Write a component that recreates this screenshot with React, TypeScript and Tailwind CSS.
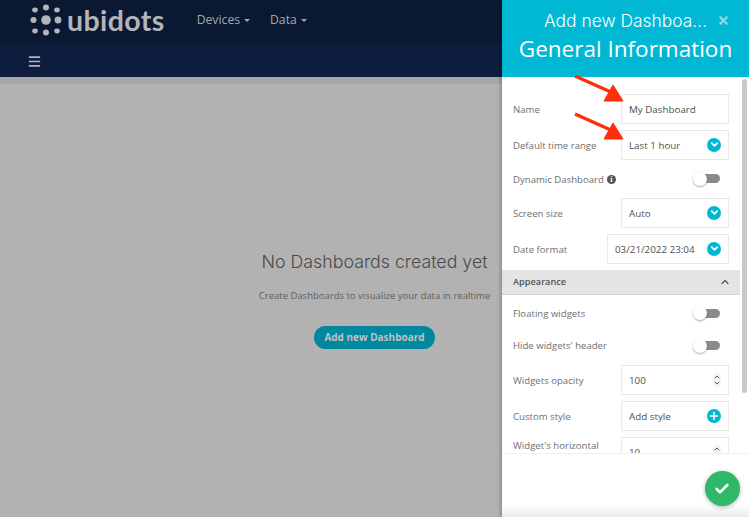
import { Check, ChevronDown, ChevronUp, Plus, X, Menu } from 'lucide-react'

const sans = "font-['Open_Sans',sans-serif]"

function Logo() {
  return (
    <svg width="32" height="32" viewBox="0 0 32 32" className="shrink-0">
      <g fill="#b3b5b9">
        <ellipse cx="5" cy="6" rx="2.8" ry="2.4" />
        <circle cx="16" cy="3.5" r="3" />
        <ellipse cx="27" cy="6" rx="2.8" ry="2.4" />
        <circle cx="3.5" cy="16" r="3" />
        <circle cx="16" cy="16" r="4.8" />
        <circle cx="28" cy="16" r="3.4" />
        <ellipse cx="5" cy="27" rx="2.8" ry="2.4" />
        <circle cx="16" cy="28.5" r="3" />
        <ellipse cx="27" cy="27" rx="2.8" ry="2.4" />
      </g>
    </svg>
  )
}

function NavItem({ label }: { label: string }) {
  return (
    <div className="flex items-center gap-[4px] text-[12.2px] text-[#a4a6ab]">
      {label}
      <span className="mt-[2px] border-x-[3px] border-t-[3px] border-x-transparent border-t-[#a4a6ab]" />
    </div>
  )
}

function Badge({ plus }: { plus?: boolean }) {
  return (
    <span className="flex h-[14px] w-[14px] shrink-0 items-center justify-center rounded-full bg-[#00b8d4] text-white">
      {plus ? <Plus size={12} strokeWidth={3} /> : <ChevronDown size={11} strokeWidth={3.5} />}
    </span>
  )
}

function Spinner() {
  return (
    <span className="flex h-[14px] w-[8px] flex-col items-center justify-center rounded-[3px] bg-[#f3f3f3] text-[#555]">
      <ChevronUp size={8} strokeWidth={3} className="-mb-[1px]" />
      <ChevronDown size={8} strokeWidth={3} className="-mt-[1px]" />
    </span>
  )
}

function Field({ label, value, control, wide, className = 'mt-[6.5px]' }: { label: string; value: string; control?: React.ReactNode; wide?: boolean; className?: string }) {
  return (
    <div className={`flex h-[29.5px] items-center justify-between ${className}`}>
      <span className="pt-[2px] text-[9.6px] text-[#6f6f6f]">{label}</span>
      <div className={`flex h-[29.5px] items-center justify-between border border-[#e9e9e9] px-[7px] text-[9.8px] text-[#4f4f4f] ${wide ? 'w-[122px]' : 'w-[108px]'}`}>
        <span className="pt-[3px]">{value}</span>
        {control}
      </div>
    </div>
  )
}

function ToggleRow({ label, info, className }: { label: string; info?: boolean; className: string }) {
  return (
    <div className={`flex items-center justify-between pr-[9px] ${className}`}>
      <span className="flex items-center gap-[3px] pt-[2px] text-[9.6px] text-[#6f6f6f]">
        {label}
        {info && (
          <span className="flex h-[9px] w-[9px] items-center justify-center rounded-full bg-[#555] font-['Liberation_Serif',serif] text-[8px] font-bold text-white">
            i
          </span>
        )}
      </span>
      <div className="relative h-[9px] w-[25px] rounded-full bg-[#8a8a8a]">
        <span className="absolute -left-[2px] -top-[2.5px] h-[14px] w-[14px] rounded-full bg-white shadow-[0_1px_2px_rgba(0,0,0,0.35)]" />
      </div>
    </div>
  )
}

export default function App() {
  return (
    <div className={`relative flex h-[517px] w-[749px] flex-col overflow-hidden bg-[#b2b2b2] ${sans}`}>
      <div className="flex h-[43px] items-center bg-[#0b1832] pb-[3px] pl-[30px]">
        <Logo />
        <span className="ml-[5px] font-['Lato',sans-serif] text-[28.5px] font-bold leading-none tracking-[0.4px] text-[#b3b5b9]">ubidots</span>
        <div className="ml-[32px] flex gap-[20px]">
          <NavItem label="Devices" />
          <NavItem label="Data" />
        </div>
      </div>
      <div className="flex h-[34px] items-center bg-[#0e1d3d] pl-[27px] pt-[2px] text-[#b3b5b9]">
        <Menu size={15} strokeWidth={2.5} />
      </div>
      <div className="h-[7px] bg-[#a6a6a6]" />
      <div className="flex flex-1 flex-col items-center pt-[167px]">
        <div className="font-['Inter',sans-serif] text-[17.8px] font-light leading-[22px] text-[#4a4a4a]">No Dashboards created yet</div>
        <div className="mt-[16px] text-[9.5px] leading-[14px] text-[#5f5f5f]">Create Dashboards to visualize your data in realtime</div>
        <div className="mt-[23px] flex h-[23px] w-[121px] items-center justify-center rounded-full bg-[#02889e] text-[10px] font-bold text-[#b9c4c6]">
          Add new Dashboard
        </div>
      </div>

      {/* drawer sits over the page */}
      <div className="absolute right-0 top-0 flex h-[517px] w-[247px] flex-col bg-white shadow-[-2px_0_3px_rgba(0,0,0,0.2)]">
        <div className="relative flex h-[77px] flex-col items-center bg-[#00b8d4] text-white">
          <div className="mt-[10px] font-['Inter',sans-serif] text-[17.4px] font-light leading-[22px]">Add new Dashboa...</div>
          <div className="mt-[1px] text-[22.5px] leading-[32px]">General Information</div>
          <X size={13} strokeWidth={4} className="absolute right-[19.5px] top-[13.5px] text-[#8fdcea]" />
        </div>

        <div className="flex h-[376px] overflow-hidden">
          <div className="w-[238px] shrink-0">
            <div className="px-[11px] pt-[10.5px]">
              <Field label="Name" value="My Dashboard" />
              <Field label="Default time range" value="Last 1 hour" control={<Badge />} />
              <ToggleRow label="Dynamic Dashboard" info className="h-[38.5px]" />
              <Field label="Screen size" value="Auto" control={<Badge />} className="mt-0" />
              <Field label="Date format" value="03/21/2022 23:04" control={<Badge />} wide />
            </div>
            <div className="mt-[6.5px] flex h-[24.5px] items-center justify-between border-b border-[#d4d4d4] bg-[#e4e4e4] pl-[11px] pr-[9px] text-[9.2px] font-semibold text-[#555]">
              Appearance
              <ChevronUp size={12} strokeWidth={2.5} className="text-[#555]" />
            </div>
            <div className="px-[11px]">
              <ToggleRow label="Floating widgets" className="mt-[2.5px] h-[32px]" />
              <ToggleRow label="Hide widgets' header" className="h-[33px]" />
              <Field label="Widgets opacity" value="100" control={<Spinner />} className="mt-[3px]" />
              <Field label="Custom style" value="Add style" control={<Badge plus />} />
              <div className="mt-[6.5px] flex items-start justify-between">
                <span className="mt-[2px] text-[9.6px] text-[#6f6f6f]">Widget's horizontal</span>
                <div className="flex h-[29.5px] w-[108px] items-center justify-between border border-[#e9e9e9] px-[7px] text-[9.8px] text-[#4f4f4f]">
                  <span className="pt-[3px]">10</span>
                  <Spinner />
                </div>
              </div>
            </div>
          </div>
          <div className="ml-[2px] pt-[2px]">
            <div className="h-[314px] w-[5px] rounded-full bg-[#c8c8c8]" />
          </div>
        </div>

        <div className="flex flex-1 items-start justify-end border-t border-[#efefef] bg-gradient-to-b from-white from-80% to-[#ececec] pr-[9.5px] pt-[17px]">
          <button className="flex h-[35px] w-[35px] items-center justify-center rounded-full bg-[#2fb868] text-white shadow-[0_1px_4px_rgba(0,0,0,0.3)]">
            <Check size={16} strokeWidth={4} />
          </button>
        </div>
      </div>

      {/* annotation arrows */}
      <svg width="749" height="517" viewBox="0 0 749 517" className="pointer-events-none absolute left-0 top-0">
        <g fill="#ff2d0b" stroke="#ff2d0b">
          <path d="M575 76 L613 93" strokeWidth="3.5" fill="none" />
          <path d="M604 101 L623 101 L613 85 Z" strokeWidth="1" />
          <path d="M575 114 L613 131" strokeWidth="3.5" fill="none" />
          <path d="M604 139 L623 139 L613 123 Z" strokeWidth="1" />
        </g>
      </svg>
    </div>
  )
}
